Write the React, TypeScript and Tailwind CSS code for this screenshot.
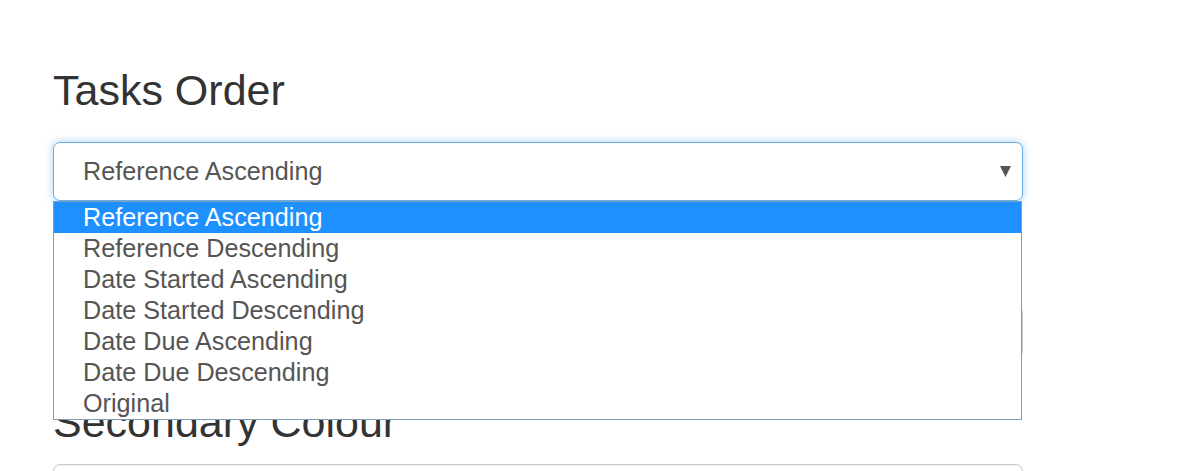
import React from "react";

const options = [
  "Reference Ascending",
  "Reference Descending",
  "Date Started Ascending",
  "Date Started Descending",
  "Date Due Ascending",
  "Date Due Descending",
  "Original",
];

export default function App() {
  return (
    <div
      className="h-[471px] overflow-hidden bg-white pl-[53px] pr-[170px] pt-[67px]"
      style={{ fontFamily: '"Liberation Sans", Arial, sans-serif' }}
    >
      <h3 className="text-[43px] leading-[46px] text-[#333] m-0">Tasks Order</h3>
      <div className="relative mt-[29px] w-[970px]">
        <div className="h-[59px] rounded-[7px] border border-[#66afe9] shadow-[0_0_8px_rgba(102,175,233,0.6)] bg-white flex items-center pl-[29px] pr-[11px]">
          <span className="text-[25.2px] text-[#555] flex-1">Reference Ascending</span>
          <svg width="11" height="11" viewBox="0 0 11 11" className="mt-[-1px]">
            <polygon points="0,0 11,0 5.5,11" fill="#555" />
          </svg>
        </div>
        <div className="absolute left-0 top-[59px] w-[969px] border border-[#7f9db9] bg-white z-10">
          {options.map((o, i) => (
            <div
              key={o}
              className={
                "h-[31px] pl-[29px] text-[25.2px] leading-[31px] " +
                (i === 0 ? "bg-[#1e90ff] text-white" : "text-[#555]")
              }
            >
              {o}
            </div>
          ))}
        </div>
      </div>
      <h3 className="mt-[30px] text-[43px] leading-[46px] text-[#333] m-0">Primary Colour</h3>
      <div className="mt-[29px] h-[52px] w-[970px] rounded-[7px] border border-[#ccc] bg-white" />
      <h3 className="mt-[41px] text-[43px] leading-[46px] text-[#333] m-0">Secondary Colour</h3>
      <div className="mt-[19px] h-[59px] w-[970px] rounded-[7px] border border-[#ccc] bg-white shadow-[inset_0_1px_1px_rgba(0,0,0,0.075)]" />
    </div>
  );
}
